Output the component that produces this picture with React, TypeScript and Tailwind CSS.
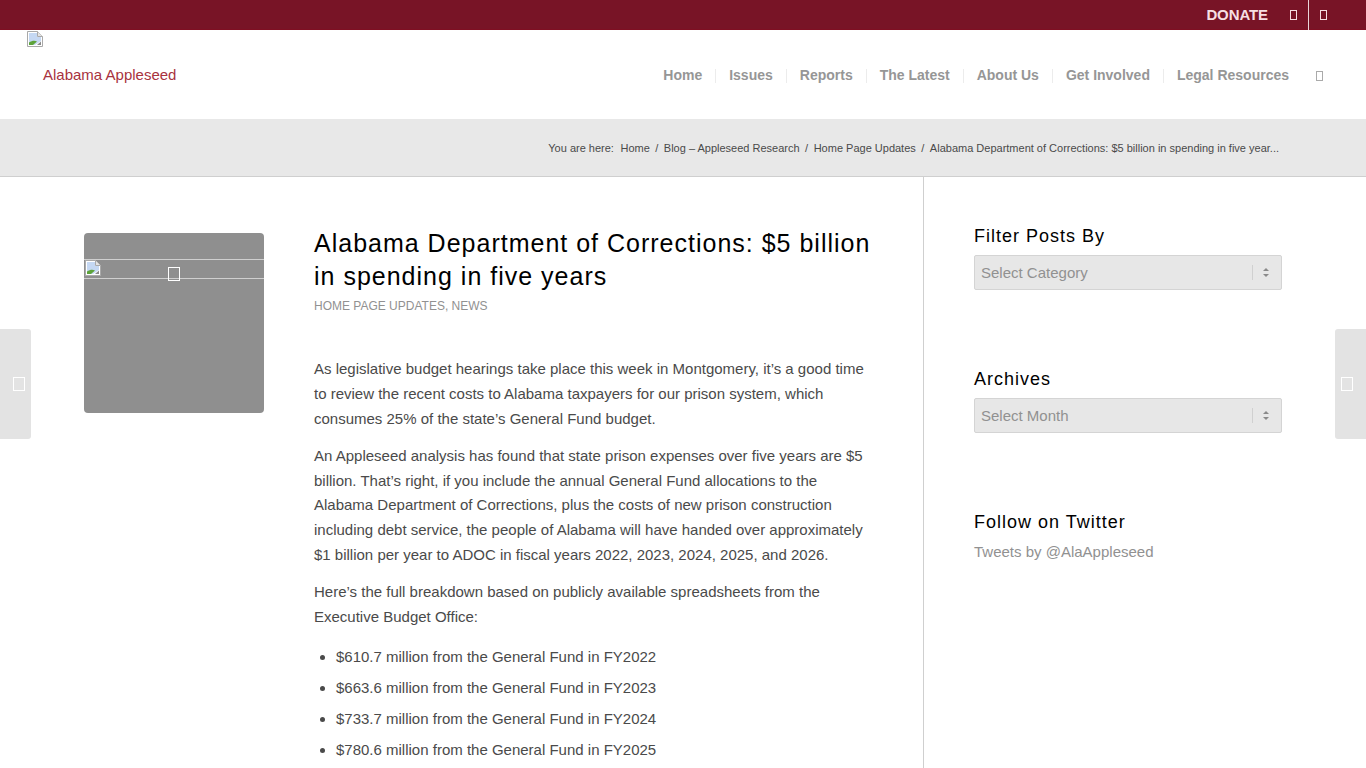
const navItems = ['Home', 'Issues', 'Reports', 'The Latest', 'About Us', 'Get Involved', 'Legal Resources'];

const crumbs = ['Home', 'Blog – Appleseed Research', 'Home Page Updates', 'Alabama Department of Corrections: $5 billion in spending in five year...'];

const budget = [
  '$610.7 million from the General Fund in FY2022',
  '$663.6 million from the General Fund in FY2023',
  '$733.7 million from the General Fund in FY2024',
  '$780.6 million from the General Fund in FY2025',
];

// the browser's broken image glyph
function BrokenImage() {
  return (
    <svg width="16" height="16" viewBox="0 0 16 16" className="shrink-0">
      <path d="M0.5 0.5H10.5L15.5 5.5V15.5H0.5Z" fill="#fff" stroke="#a9a9a9" />
      <path d="M10.5 0.5V5.5H15.5" fill="#e4e4e4" stroke="#a9a9a9" />
      <path d="M2 2H10V6H14V10L8 14H2Z" fill="#c5d8f3" />
      <path d="M2 14V11.5C5 9.5 8 9.5 10 10.5L6 14Z" fill="#5da33a" />
      <path d="M10 14L14 10.5V14Z" fill="#8a8a8a" />
    </svg>
  );
}

// missing icon font glyph
function Tofu({ className }: { className: string }) {
  return <span className={`block border ${className}`} />;
}

function Widget({ title, children }: { title: string; children: React.ReactNode }) {
  return (
    <div>
      <h3 className="text-[18px] leading-[24px] tracking-[1px] text-black">{title}</h3>
      <div className="mt-[7px]">{children}</div>
    </div>
  );
}

function FakeSelect({ label }: { label: string }) {
  return (
    <div className="flex h-[35px] w-[308px] items-center justify-between rounded-[2px] border border-[#d4d4d4] bg-[#e7e7e7] pl-[6px] pr-[12px]">
      <span className="pt-px text-[15px] text-[#919191]">{label}</span>
      <div className="flex items-center gap-[10px]">
        <span className="h-[15px] w-px bg-[#d0d0d0]" />
        <svg width="6" height="9" viewBox="0 0 6 9" fill="#8a8a8a">
          <path d="M3 0L6 3H0Z" />
          <path d="M3 9L0 6H6Z" />
        </svg>
      </div>
    </div>
  );
}

export default function App() {
  return (
    <div className="relative h-screen overflow-hidden bg-white font-['Liberation_Sans',Arial,sans-serif] text-[15px] text-[#4a4a4a]">
      {/* Barra superior */}
      <div className="flex h-[30px] items-center justify-end border-b border-[#7f0f22] bg-[#781426] text-white">
        <span className="mr-[11px] pt-px text-[15px] font-bold tracking-[-0.1px] text-[#f6dfe3]">DONATE</span>
        <div className="flex h-[30px] w-[29px] items-center justify-center">
          <Tofu className="h-[10px] w-[7px] border-[#f6dfe3]" />
        </div>
        <div className="flex h-[30px] w-[29px] items-center justify-center border-l border-[#e9d5d8]">
          <Tofu className="h-[10px] w-[7px] border-[#f6dfe3]" />
        </div>
        <div className="w-[29px]" />
      </div>

      {/* Header */}
      <header className="flex h-[90px] justify-between border-b border-[#e8e8e8] pl-[27px] pr-[43px]">
        <div className="flex flex-col">
          <div className="mt-px">
            <BrokenImage />
          </div>
          <span className="ml-[16px] mt-[19px] text-[15px] leading-[18px] text-[#a8323e]">Alabama Appleseed</span>
        </div>
        <nav className="flex items-center pt-[2px]">
          {navItems.map((item, i) => (
            <div key={item} className="flex items-center">
              {i > 0 && <span className="mx-[13px] h-[14px] w-px bg-[#ececec]" />}
              <span className="text-[14px] font-bold text-[#969696]">{item}</span>
            </div>
          ))}
          <Tofu className="ml-[27px] h-[10px] w-[7px] border-[#aaa]" />
        </nav>
      </header>

      {/* Breadcrumb */}
      <div className="flex h-[57px] items-center justify-end gap-[5.5px] border-b border-[#cfcfcf] bg-[#e8e8e8] pr-[87px] text-[11px]">
        <span className="mr-px">You are here:</span>
        {crumbs.map((crumb, i) => (
          <div key={crumb} className="flex items-center gap-[5.5px]">
            {i > 0 && <span>/</span>}
            <span>{crumb}</span>
          </div>
        ))}
      </div>

      {/* Contenido */}
      <div className="flex">
        <main className="flex w-[924px] shrink-0 border-r border-[#cfcfcf] pb-[40px] pl-[84px] pt-[56px]">
          <div className="relative h-[180px] w-[180px] shrink-0 rounded-[4px] bg-[#8f8f8f]">
            <div className="absolute left-0 top-[26px] h-[20px] w-[180px] border-y border-[#cfcfcf]">
              <div className="absolute left-px top-0">
                <BrokenImage />
              </div>
              <Tofu className="absolute left-[84px] top-[7px] h-[14px] w-[12px] border-white" />
            </div>
          </div>

          <article className="ml-[50px] w-[560px]">
            <h1 className="-mt-[6px] text-[25px] leading-[33px] tracking-[1px] text-black">
              Alabama Department of Corrections: $5 billion in spending in five years
            </h1>
            <p className="mt-[4px] text-[12px] leading-[18px] text-[#919191]">HOME PAGE UPDATES, NEWS</p>

            <div className="mt-[42px] space-y-[12.5px] leading-[24.75px]">
              <p>
                As legislative budget hearings take place this week in Montgomery, it’s a good time to review the recent
                costs to Alabama taxpayers for our prison system, which consumes 25% of the state’s General Fund budget.
              </p>
              <p>
                An Appleseed analysis has found that state prison expenses over five years are $5 billion. That’s right,
                if you include the annual General Fund allocations to the Alabama Department of Corrections, plus the
                costs of new prison construction including debt service, the people of Alabama will have handed over
                approximately $1 billion per year to ADOC in fiscal years 2022, 2023, 2024, 2025, and 2026.
              </p>
              <p>
                Here’s the full breakdown based on publicly available spreadsheets from the Executive Budget Office:
              </p>
            </div>

            <ul className="ml-[22px] mt-[15px] list-disc space-y-[6.25px] leading-[24.75px]">
              {budget.map((line) => (
                <li key={line}>{line}</li>
              ))}
            </ul>
          </article>
        </main>

        <aside className="ml-[50px] flex w-[308px] flex-col gap-[77px] pt-[47px]">
          <Widget title="Filter Posts By">
            <FakeSelect label="Select Category" />
          </Widget>
          <Widget title="Archives">
            <FakeSelect label="Select Month" />
          </Widget>
          <Widget title="Follow on Twitter">
            <span className="text-[#919191]">Tweets by @AlaAppleseed</span>
          </Widget>
        </aside>
      </div>

      {/* Flechas laterales */}
      <div className="absolute left-0 top-[329px] flex h-[110px] w-[31px] items-center justify-start rounded-r-[3px] bg-[#e3e3e3] pl-[13px]">
        <Tofu className="h-[14px] w-[12px] border-white" />
      </div>
      <div className="absolute right-0 top-[329px] flex h-[110px] w-[31px] items-center justify-end rounded-l-[3px] bg-[#e3e3e3] pr-[13px]">
        <Tofu className="h-[14px] w-[12px] border-white" />
      </div>
    </div>
  );
}
